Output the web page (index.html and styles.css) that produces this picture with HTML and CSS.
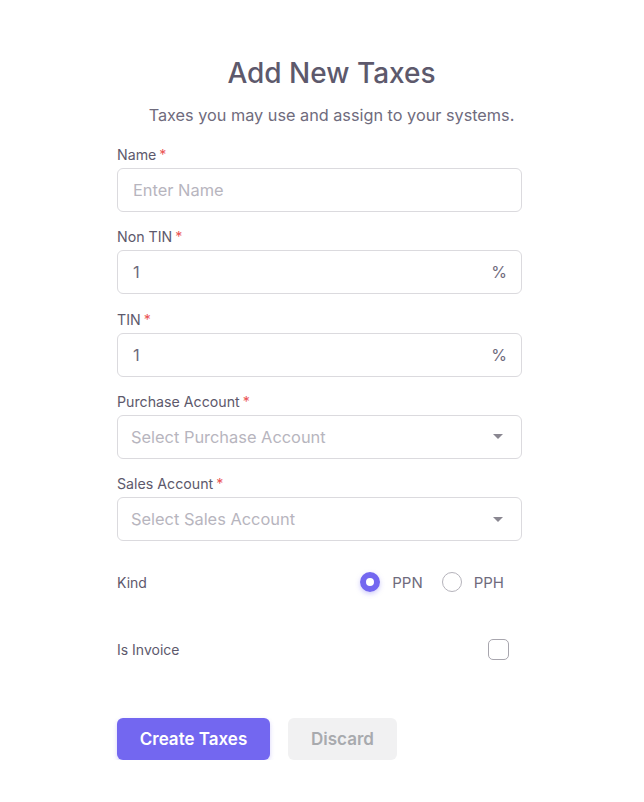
FILE: index.html
```html
<!DOCTYPE html>
<html>
<head>
<meta charset="utf-8">
<link rel="stylesheet" href="styles.css">
</head>
<body>
<div class="page">
  <form class="form">
    <div class="header">
      <h3 class="title">Add New Taxes</h3>
      <p class="subtitle">Taxes you may use and assign to your systems.</p>
    </div>

    <div class="field">
      <label class="label">Name<span class="req">*</span></label>
      <div class="control"><span class="placeholder">Enter Name</span></div>
    </div>

    <div class="field">
      <label class="label">Non TIN<span class="req">*</span></label>
      <div class="control"><span class="value">1</span><span class="suffix">%</span></div>
    </div>

    <div class="field">
      <label class="label">TIN<span class="req">*</span></label>
      <div class="control"><span class="value">1</span><span class="suffix">%</span></div>
    </div>

    <div class="field">
      <label class="label">Purchase Account<span class="req">*</span></label>
      <div class="control select"><span class="placeholder">Select Purchase Account</span><span class="caret"></span></div>
    </div>

    <div class="field">
      <label class="label">Sales Account<span class="req">*</span></label>
      <div class="control select"><span class="placeholder">Select Sales Account</span><span class="caret"></span></div>
    </div>

    <div class="row kind">
      <span class="row-label">Kind</span>
      <div class="radios">
        <span class="radio checked"></span><span class="radio-text">PPN</span>
        <span class="radio"></span><span class="radio-text">PPH</span>
      </div>
    </div>

    <div class="row invoice">
      <span class="row-label">Is Invoice</span>
      <span class="checkbox"></span>
    </div>

    <div class="actions">
      <button type="button" class="btn primary">Create Taxes</button>
      <button type="button" class="btn secondary">Discard</button>
    </div>
  </form>
</div>
</body>
</html>
```

FILE: styles.css
```css
* { box-sizing: border-box; }
html, body { margin: 0; padding: 0; background: #fff; }
body {
  font-family: Inter, "Public Sans", "Noto Sans", sans-serif;
  color: #5d596c;
}
.page { padding: 56px 0 0 117px; }
.form { width: 405px; }
.header { text-align: center; padding-left: 24px; }
.title {
  margin: 0;
  font-size: 28px;
  font-weight: 500;
  line-height: 34px;
  color: #5d596c;
}
.subtitle {
  margin: 14px 0 0;
  font-size: 16.25px;
  line-height: 22px;
  color: #6f6b7d;
}
.field { margin-top: 20px; }
.field + .field { margin-top: 16.3px; }
.label {
  display: block;
  font-size: 14.2px;
  line-height: 18px;
  color: #5d596c;
  margin-bottom: 4px;
}
.req { color: #ea5455; margin-left: 3px; }
.control {
  height: 44px;
  border: 1px solid #dbdade;
  border-radius: 6px;
  display: flex;
  align-items: center;
  padding: 0 14px 0 15px;
  font-size: 16.4px;
}
.placeholder { color: #b7b5be; }
.value { color: #6f6b7d; }
.suffix { margin-left: auto; color: #6f6b7d; font-size: 16px; }
.select { padding-left: 13px; padding-right: 18px; }
.caret {
  margin-left: auto;
  width: 0; height: 0;
  border-left: 5px solid transparent;
  border-right: 5px solid transparent;
  border-top: 5px solid #8a8791;
}
.row {
  display: flex;
  align-items: center;
  justify-content: space-between;
  font-size: 14px;
  color: #5d596c;
}
.kind { margin-top: 29px; height: 24px; }
.invoice { margin-top: 43px; height: 24px; padding-right: 13px; }
.radios { display: flex; align-items: center; padding-right: 18px; }
.radio {
  width: 20px; height: 20px;
  border-radius: 50%;
  border: 1.5px solid #b5b3bb;
  display: inline-block;
}
.radio.checked {
  border: 6px solid #7367f0;
  box-shadow: 0 2px 5px rgba(115,103,240,0.35);
}
.radio-text { margin-left: 12px; margin-right: 19px; color: #6f6b7d; font-size: 15px; }
.radio-text:last-child { margin-right: 0; }
.checkbox {
  width: 21px; height: 21px;
  border: 1.5px solid #a8a6ae;
  border-radius: 5px;
  display: inline-block;
}
.actions { margin-top: 57px; display: flex; gap: 18px; }
.btn {
  height: 42px;
  border: none;
  border-radius: 6px;
  font-family: inherit;
  font-size: 17px;
  font-weight: 600;
  padding: 0;
}
.primary { background: #7367f0; color: #fff; width: 153px; box-shadow: 0 2px 4px rgba(115,103,240,0.3); }
.secondary { background: #f1f1f2; color: #a8aaae; width: 109px; }
```
